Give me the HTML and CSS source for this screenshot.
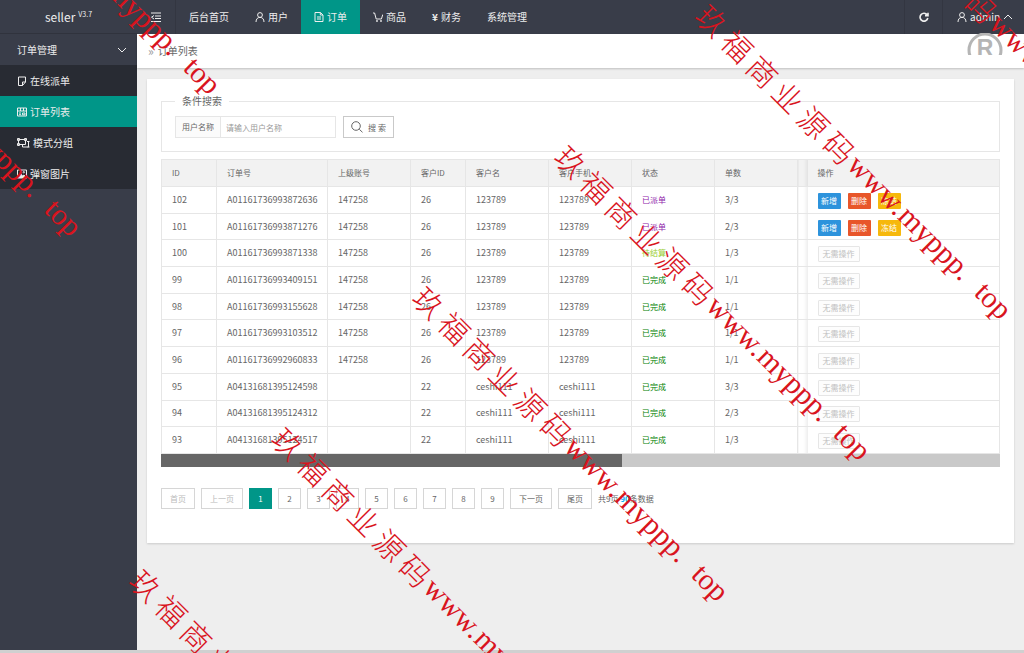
FILE: index.html
```html
<!DOCTYPE html>
<html lang="zh-CN">
<head>
    <meta charset="UTF-8">
    <meta name="viewport" content="width=device-width, initial-scale=1.0">
    <title>订单列表</title>
    <link rel="stylesheet" href="styles.css">
</head>
<body>
    <!-- Top bar -->
    <header class="header">
        <a class="logo" href="#">seller <sup>V3.7</sup></a>
        <button class="toggle" aria-label="菜单">
            <svg class="icon" viewBox="0 0 10 10"><path d="M0 1h10M4 4h6M4 6.5h6M0 9.5h10M3 3.5L.5 5.2 3 7"/></svg>
        </button>
        <nav class="nav">
            <a href="#">后台首页</a>
            <a href="#"><svg class="icon" viewBox="0 0 10 10"><circle cx="5" cy="3" r="2.4"/><path d="M1 10c0-3 1.6-4.6 4-4.6S9 7 9 10"/></svg>用户</a>
            <a href="#" class="active"><svg class="icon" viewBox="0 0 10 10"><path d="M1 .5h5.5L9 3v6.5H1zM6.3.5V3H9M3 5h4M3 7h4"/></svg>订单</a>
            <a href="#"><svg class="icon" viewBox="0 0 10 10"><path d="M0 1h1.6l1.6 6h5.2L9.8 2.5"/><circle cx="4" cy="9" r=".6"/><circle cx="8" cy="9" r=".6"/></svg>商品</a>
            <a href="#"><b class="yen">¥</b>财务</a>
            <a href="#">系统管理</a>
        </nav>
        <button class="refresh" aria-label="刷新">
            <svg class="icon bold" viewBox="0 0 10 10"><path d="M8.2 3A3.9 3.9 0 1 0 8.8 6M9 .8v2.8H6"/></svg>
        </button>
        <a class="user" href="#">
            <svg class="icon" viewBox="0 0 10 10"><circle cx="5" cy="3" r="2.4"/><path d="M1 10c0-3 1.6-4.6 4-4.6S9 7 9 10"/></svg>admin
            <svg class="icon" viewBox="0 0 10 10"><path d="M1 7l4-4 4 4"/></svg>
        </a>
    </header>

    <div class="layout">
        <!-- Left menu -->
        <aside class="side">
            <a class="side-title" href="#">订单管理
                <svg class="icon" viewBox="0 0 10 10"><path d="M1 3l4 4 4-4"/></svg>
            </a>
            <ul class="side-menu">
                <li><a href="#"><svg class="icon" viewBox="0 0 10 10"><path d="M1.5 1h7v5l-3 3.5h-4zM8.5 6h-3v3.5"/></svg>在线派单</a></li>
                <li><a href="#" class="active"><svg class="icon" viewBox="0 0 10 10"><path d="M.5 1h9v8h-9zM.5 4h9M2 6h2M2 7.7h2M5.5 6h2.5v1.8H5.5zM3.5 1v3M6.5 1v3"/></svg>订单列表</a></li>
                <li><a href="#"><svg class="icon wide" viewBox="0 0 13 10"><path d="M1.5 1.5h7v5h-7zM0.5.5h2v2h-2zM7.5.5h2v2h-2zM.5 5.5h2v2h-2zM10 3.5h2.5M11.5 3.5v5.5h-6V7M10.5 9h2"/></svg>模式分组</a></li>
                <li><a href="#"><svg class="icon" viewBox="0 0 10 10"><path d="M.5 1h9v8h-9z"/><path class="fill" d="M1 8.5l2.5-4 2 2.5L7 6l2 2.5z"/><circle cx="6.8" cy="3.2" r=".7"/></svg>弹窗图片</a></li>
            </ul>
        </aside>

        <main class="main">
            <div class="crumb"><span>»</span>订单列表</div>

            <div class="card">
                <form>
                    <fieldset class="search">
                        <legend>条件搜索</legend>
                        <div class="search-row">
                            <div class="field">
                                <label for="username">用户名称</label>
                                <input type="text" id="username" placeholder="请输入用户名称">
                            </div>
                            <button type="button" class="search-btn">
                                <svg class="icon" viewBox="0 0 12 12"><circle cx="5" cy="5" r="4.3"/><path d="M8.3 8.3l3.2 3"/></svg>搜 索
                            </button>
                        </div>
                    </fieldset>
                </form>

                <table class="orders">
                    <colgroup>
                        <col class="c-id"><col class="c-no"><col class="c-md"><col class="c-id"><col class="c-md">
                        <col class="c-md"><col class="c-md"><col class="c-md"><col class="c-gap"><col>
                    </colgroup>
                    <thead>
                        <tr><th>ID</th><th>订单号</th><th>上级账号</th><th>客户ID</th><th>客户名</th><th>客户手机</th><th>状态</th><th>单数</th><th class="gap"></th><th class="ops">操作</th></tr>
                    </thead>
                    <tbody id="order-rows"></tbody>
                </table>
                <div class="scrollbar"><div class="thumb"></div></div>

                <!-- Pagination -->
                <div class="pager">
                    <button disabled>首页</button>
                    <button disabled>上一页</button>
                    <button class="current">1</button>
                    <button>2</button>
                    <button>3</button>
                    <button>4</button>
                    <button>5</button>
                    <button>6</button>
                    <button>7</button>
                    <button>8</button>
                    <button>9</button>
                    <button>下一页</button>
                    <button>尾页</button>
                    <span class="total">共9页 <b>90</b>条数据</span>
                </div>
            </div>
        </main>
    </div>
    <div class="bottom-bar"></div>

    <!-- Registered mark over the breadcrumb -->
    <svg class="reg" viewBox="0 0 36 22">
        <circle cx="18" cy="17" r="16"/>
        <text x="18" y="23" text-anchor="middle">R</text>
    </svg>

    <div class="watermarks" id="watermarks" aria-hidden="true"></div>

    <script src="orders.js"></script>
</body>
</html>
```

FILE: styles.css
```css
* {
    box-sizing: border-box;
}

body {
    margin: 0;
    min-height: 100vh;
    display: flex;
    flex-direction: column;
    font-family: "Noto Sans CJK SC", sans-serif;
    font-size: 10px;
    line-height: 16px;
    color: #666;
    background-color: #eee;
}

a {
    color: inherit;
    text-decoration: none;
}

button, input {
    font-family: inherit;
    font-size: 8px;
    color: inherit;
}

.icon {
    width: 10px;
    height: 10px;
    flex: none;
    fill: none;
    stroke: currentColor;
    stroke-width: 1;
}

.icon.wide {
    width: 13px;
}

.icon.bold {
    stroke-width: 1.6;
}

.icon .fill {
    fill: currentColor;
}

/* Top bar */
.header {
    display: flex;
    height: 34px;
    background-color: #393d49;
    color: #eee;
}

.header a, .header button {
    display: flex;
    align-items: center;
}

.header .logo {
    width: 137px;
    justify-content: center;
    gap: 3px;
    font-size: 12px;
    border-bottom: 1px solid #30333d;
}

.logo sup {
    font-size: 7px;
    line-height: 8px;
    align-self: flex-start;
    margin-top: 10px;
}

.toggle, .refresh {
    width: 39px;
    padding: 0;
    justify-content: center;
    background: none;
    border: 0;
    border-right: 1px solid #333641;
}

.refresh {
    border-left: 1px solid #333641;
}

.nav {
    flex: 1;
    display: flex;
}

.nav a {
    padding: 0 13px;
    gap: 3px;
}

.nav .active {
    background-color: #009688;
}

.yen {
    width: 6px;
}

.user {
    padding: 0 11px 0 14px;
    gap: 3px;
}

/* Left menu */
.layout {
    flex: 1;
    display: flex;
}

.side {
    width: 137px;
    flex: none;
    background-color: #393d49;
    color: #eee;
}

.side-title {
    display: flex;
    align-items: center;
    justify-content: space-between;
    height: 31px;
    padding: 0 10px 0 17px;
}

.side-menu {
    margin: 0;
    padding: 0;
    list-style: none;
    background-color: #282b33;
}

.side-menu a {
    display: flex;
    align-items: center;
    gap: 3px;
    height: 31px;
    padding-left: 17px;
}

.side-menu .active {
    background-color: #009688;
}

/* Content */
.main {
    flex: 1;
    min-width: 0;
}

.crumb {
    display: flex;
    align-items: center;
    gap: 4px;
    height: 34px;
    padding-left: 11px;
    background-color: #fff;
    box-shadow: 0 1px 2px rgba(0, 0, 0, 0.2);
}

.crumb span {
    font-size: 12px;
    color: #999;
}

.card {
    margin: 11px 10px;
    padding: 14px 14px 34px;
    background-color: #fff;
    box-shadow: 0 1px 2px rgba(0, 0, 0, 0.15);
}

.search {
    margin: 0 0 7px;
    padding: 7px 13px 13px;
    border: 1px solid #e6e6e6;
}

.search legend {
    padding: 0 7px;
}

.search-row {
    display: flex;
    gap: 7px;
}

.field {
    display: flex;
    width: 161px;
    height: 22px;
    border: 1px solid #e6e6e6;
}

.field label {
    width: 45px;
    flex: none;
    font-size: 8px;
    line-height: 20px;
    text-align: center;
    background-color: #fbfbfb;
    border-right: 1px solid #e6e6e6;
}

.field input {
    flex: 1;
    min-width: 0;
    padding: 0 5px;
    border: 0;
    outline: none;
}

.field input::placeholder {
    color: #999;
}

.search-btn {
    display: flex;
    align-items: center;
    justify-content: center;
    gap: 5px;
    width: 51px;
    height: 22px;
    padding: 0;
    background-color: #fff;
    border: 1px solid #c9c9c9;
}

.search-btn .icon {
    width: 12px;
    height: 12px;
}

/* Orders table */
.orders {
    width: 100%;
    height: 295px;
    table-layout: fixed;
    border-collapse: collapse;
}

.c-id {
    width: 55px;
}

.c-no {
    width: 111px;
}

.c-md {
    width: 83px;
}

.c-gap {
    width: 10px;
}

.orders th, .orders td {
    padding: 0 10px;
    border: 1px solid #e6e6e6;
    font-size: 9px;
    line-height: 14px;
    text-align: left;
    white-space: nowrap;
}

.orders th {
    height: 27px;
    font-size: 8px;
    font-weight: normal;
    background-color: #f2f2f2;
}

.orders .gap {
    padding: 0;
    border-right: 0;
    background-image: linear-gradient(to right, transparent 50%, rgba(0, 0, 0, 0.07));
}

.orders .ops {
    border-left: 0;
}

.orders .status {
    font-size: 8px;
}

.orders .sent {
    color: #8e24aa;
}

.orders .pending {
    color: #9acd32;
}

.orders .done {
    color: #008000;
}

.btns {
    display: flex;
    gap: 7px;
    padding-top: 2px;
}

.btns button {
    width: 23px;
    height: 16px;
    padding: 0;
    line-height: 14px;
    color: #fff;
    border: 0;
    border-radius: 1px;
}

.btns .add {
    background-color: #2d93dc;
}

.btns .del {
    background-color: #e8562a;
}

.btns .freeze {
    background-color: #f6b80c;
}

.btns .none {
    width: 42px;
    color: #c0c0c0;
    background-color: #fdfdfd;
    border: 1px solid #e6e6e6;
}

.scrollbar {
    height: 13px;
    background-color: #c9c9c9;
}

.thumb {
    width: 55%;
    height: 13px;
    background-color: #666;
}

/* Pagination */
.pager {
    display: flex;
    align-items: center;
    gap: 6px;
    margin-top: 21px;
}

.pager button {
    min-width: 23px;
    height: 21px;
    padding: 0 8px;
    background-color: #fff;
    border: 1px solid #d6d6d6;
}

.pager button:disabled {
    color: #bbb;
}

.pager .current {
    color: #fff;
    background-color: #009688;
    border-color: #009688;
}

.total {
    font-size: 8px;
}

.total b {
    color: #01aaed;
}

.bottom-bar {
    height: 3px;
    background-color: #d0d0d0;
}

.reg {
    position: absolute;
    top: 33px;
    right: 21px;
    width: 36px;
    height: 22px;
    overflow: hidden;
}

.reg circle {
    fill: none;
    stroke: #b5b5b5;
    stroke-width: 3;
}

.reg text {
    font: bold 23px "Liberation Sans", sans-serif;
    fill: #b5b5b5;
}

/* Diagonal watermark */
.watermarks {
    position: absolute;
    inset: 0;
    overflow: hidden;
    pointer-events: none;
}

.wm {
    position: absolute;
    display: flex;
    align-items: center;
    font-size: 30px;
    font-weight: 300;
    line-height: 40px;
    white-space: nowrap;
    color: #d9141e;
    transform: rotate(45deg);
    transform-origin: 0 20px;
}

.wm .zh {
    width: 36px;
    text-align: center;
}

.wm .en {
    font-family: "Liberation Serif", serif;
}

.wm .www {
    width: 72px;
}

.wm .host {
    width: 108px;
}

.wm-1 { left: 700px; top: -13px; }
.wm-2 { left: 559px; top: 128px; }
.wm-3 { left: 417px; top: 269px; }
.wm-4 { left: 276px; top: 410px; }
.wm-5 { left: 134px; top: 552px; }
.wm-6 { left: -91px; top: -238px; }
.wm-7 { left: -230px; top: -96px; }
.wm-8 { left: 842px; top: -154px; }
```

FILE: orders.js
```js
const orders = [
    ['102', 'A01161736993872636', '147258', '26', '123789', 'sent', '3/3'],
    ['101', 'A01161736993871276', '147258', '26', '123789', 'sent', '2/3'],
    ['100', 'A01161736993871338', '147258', '26', '123789', 'pending', '1/3'],
    ['99', 'A01161736993409151', '147258', '26', '123789', 'done', '1/1'],
    ['98', 'A01161736993155628', '147258', '26', '123789', 'done', '1/1'],
    ['97', 'A01161736993103512', '147258', '26', '123789', 'done', '1/1'],
    ['96', 'A01161736992960833', '147258', '26', '123789', 'done', '1/1'],
    ['95', 'A04131681395124598', '', '22', 'ceshi111', 'done', '3/3'],
    ['94', 'A04131681395124312', '', '22', 'ceshi111', 'done', '2/3'],
    ['93', 'A04131681395124517', '', '22', 'ceshi111', 'done', '1/3']
];

const statusText = { sent: '已派单', pending: '待结算', done: '已完成' };

const editButtons = '<button class="add">新增</button><button class="del">删除</button><button class="freeze">冻结</button>';
const noButtons = '<button class="none" disabled>无需操作</button>';

// Fill the table body
document.getElementById('order-rows').innerHTML = orders.map(function (o) {
    const [id, no, parent, cid, name, status, count] = o;
    return `<tr>
        <td>${id}</td><td>${no}</td><td>${parent}</td><td>${cid}</td><td>${name}</td><td>${name}</td>
        <td class="status ${status}">${statusText[status]}</td><td>${count}</td><td class="gap"></td>
        <td class="ops"><div class="btns">${status === 'sent' ? editButtons : noButtons}</div></td>
    </tr>`;
}).join('');

// Repeat the watermark over the page
const zh = [...'玖福商业源码'].map(c => `<span class="zh">${c}</span>`).join('');
const mark = zh + '<span class="en www">www.</span><span class="en host">myppp.</span><span class="en">top</span>';
let marks = '';
for (let i = 1; i <= 8; i++) {
    marks += `<div class="wm wm-${i}">${mark}</div>`;
}
document.getElementById('watermarks').innerHTML = marks;
```
